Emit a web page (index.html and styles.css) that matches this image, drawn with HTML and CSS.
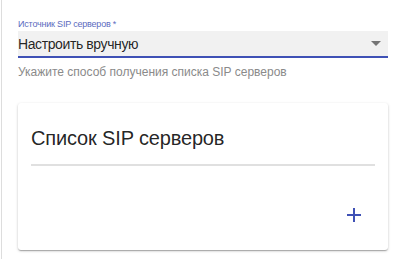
FILE: index.html
```html
<!DOCTYPE html>
<html lang="ru">
<head>
  <meta charset="UTF-8" />
  <title>SIP</title>
  <link rel="stylesheet" href="styles.css">
</head>
<body>
  <div class="page">
    <!-- Source select -->
    <div class="field">
      <label class="field-label">Источник SIP серверов *</label>
      <div class="select">
        <span class="select-value">Настроить вручную</span>
        <span class="select-arrow"></span>
      </div>
      <div class="field-hint">Укажите способ получения списка SIP серверов</div>
    </div>

    <!-- Servers card -->
    <div class="card">
      <h2 class="card-title">Список SIP серверов</h2>
      <div class="card-divider"></div>
      <div class="card-actions">
        <button class="add-btn" aria-label="Добавить">
          <svg width="14" height="14" viewBox="0 0 14 14"><path d="M7 0v14M0 7h14" stroke="#3f51b5" stroke-width="2"/></svg>
        </button>
      </div>
    </div>
  </div>
</body>
</html>
```

FILE: styles.css
```css
/* Global */
body {
  margin: 0;
  background: #fff;
  font-family: "Liberation Sans", Arial, sans-serif;
  color: rgba(0,0,0,0.87);
}
.page {
  border-left: 1px solid #ddd;
  margin-left: 1px;
  padding: 19px 15px 0 16px;
  min-height: 259px;
  box-sizing: border-box;
}
/* Select field */
.field {
  margin-bottom: 24px;
}
.field-label {
  display: block;
  font-size: 9px;
  letter-spacing: -0.2px;
  color: #5c6bc0;
  line-height: 11px;
  padding-bottom: 1px;
}
.select {
  display: flex;
  align-items: center;
  justify-content: space-between;
  background: #f1f1f1;
  height: 25px;
  border-bottom: 2px solid #3f51b5;
  padding: 0 7px 0 0;
}
.select-value {
  font-size: 14px;
  letter-spacing: -0.4px;
  line-height: 25px;
  padding-top: 1px;
}
.select-arrow {
  width: 0;
  height: 0;
  border-left: 5px solid transparent;
  border-right: 5px solid transparent;
  border-top: 5px solid #757575;
}
.field-hint {
  font-size: 12px;
  color: #8a8a8a;
  margin-top: 7px;
}
/* Card */
.card {
  background: #fff;
  border-radius: 3px;
  box-shadow: 0 1px 3px rgba(0,0,0,0.2), 0 1px 1px rgba(0,0,0,0.14), 0 2px 1px -1px rgba(0,0,0,0.12);
  padding: 23px 13px 0 13px;
  height: 147px;
  box-sizing: border-box;
}
.card-title {
  font-size: 20px;
  font-weight: 400;
  letter-spacing: -0.15px;
  margin: 0;
  line-height: 24px;
  color: rgba(0,0,0,0.87);
}
.card-divider {
  height: 2px;
  background: #e0e0e0;
  margin-top: 14px;
}
.card-actions {
  display: flex;
  justify-content: flex-end;
  padding-top: 42px;
  padding-right: 14px;
}
.add-btn {
  border: none;
  background: none;
  padding: 0;
  width: 14px;
  height: 14px;
  cursor: pointer;
}
```
